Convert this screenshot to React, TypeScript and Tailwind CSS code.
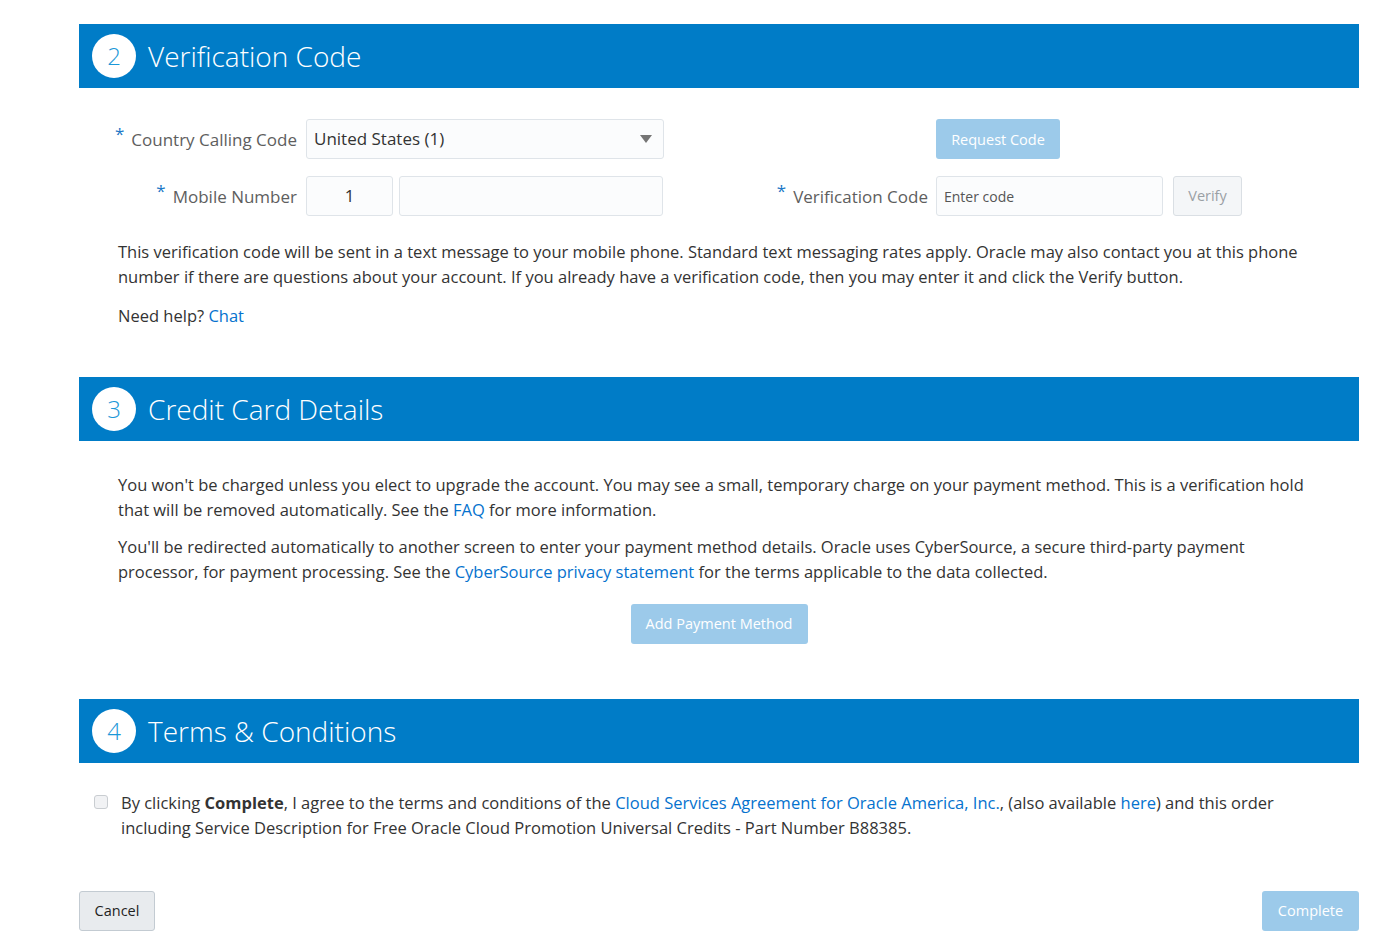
import React from "react";

const font = { fontFamily: "'Open Sans', 'Noto Sans', sans-serif" };

const SectionHeader: React.FC<{ step: number; title: string }> = ({ step, title }) => (
    <div className="flex h-[64px] items-center bg-[#007cc7] pl-[13px]">
        <div className="flex h-[44px] w-[44px] items-center justify-center rounded-full bg-white text-[24px] font-light text-[#1b98d8]">
            {step}
        </div>
        <h2 className="ml-[12px] -mt-[1px] text-[28px] font-light text-white">{title}</h2>
    </div>
);

const Label: React.FC<{ text: string; className?: string }> = ({ text, className }) => (
    <label className={"flex items-start justify-end pt-[1px] text-[17px] text-[#5e5e5e] " + (className || "")}>
        <span className="relative -top-[6px] mr-[7px] text-[17px] text-[#1c78c7]">*</span>
        <span>{text}</span>
    </label>
);

const boxBase = "h-[40px] rounded-[3px] border border-[#dfe4e9] bg-[#fbfcfd] text-[#333]";
const inputBase = boxBase + " text-[17px]";

export default function App() {
    return (
        <div className="min-h-[941px] bg-white pt-[24px] text-[#333]" style={font}>
            <div className="ml-[79px] w-[1280px]">
                {/* Verification Code */}
                <SectionHeader step={2} title="Verification Code" />
                <div className="pt-[31px] pb-[49px]">
                    <div className="flex h-[40px] items-center">
                        <div className="flex w-[621px] items-center">
                            <Label text="Country Calling Code" className="w-[218px]" />
                            <div className={inputBase + " ml-[9px] flex w-[358px] items-center justify-between px-[7px]"}>
                                <span>United States (1)</span>
                                <svg width="12" height="8" viewBox="0 0 12 8" className="mr-[4px]">
                                    <path d="M0 0h12L6 8z" fill="#757575" />
                                </svg>
                            </div>
                        </div>
                        <div className="ml-[236px]">
                            <button className="h-[40px] w-[124px] rounded-[3px] bg-[#9ccaea] pt-[1px] text-[14.5px] text-white">
                                Request Code
                            </button>
                        </div>
                    </div>
                    <div className="mt-[17px] flex h-[40px] items-center">
                        <div className="flex w-[621px] items-center">
                            <Label text="Mobile Number" className="w-[218px]" />
                            <div className={inputBase + " ml-[9px] flex w-[87px] items-center justify-center"}>1</div>
                            <div className={inputBase + " ml-[6px] w-[264px]"}></div>
                        </div>
                        <Label text="Verification Code" className="w-[228px]" />
                        <div className={boxBase + " ml-[8px] flex w-[227px] items-center px-[7px] text-[14px] text-[#555]"}>
                            Enter code
                        </div>
                        <button className="ml-[10px] h-[40px] w-[69px] rounded-[3px] border border-[#dadfe4] bg-[#f4f6f8] text-[14.5px] text-[#9aa0a5]">
                            Verify
                        </button>
                    </div>
                    <div className="mt-[23px] pl-[39px] pr-[40px] text-[16.5px] leading-[25px]">
                        <p>
                            This verification code will be sent in a text message to your mobile phone. Standard text messaging rates apply. Oracle may also contact you at this phone number if there are questions about your account. If you already have a verification code, then you may enter it and click the Verify button.
                        </p>
                        <p className="mt-[14px]">
                            Need help? <a className="text-[#0572ce]">Chat</a>
                        </p>
                    </div>
                </div>

                {/* Credit Card Details */}
                <SectionHeader step={3} title="Credit Card Details" />
                <div className="pt-[31px] pb-[55px]">
                    <div className="pl-[39px] pr-[40px] text-[16.5px] leading-[25px]">
                        <p>
                            You won't be charged unless you elect to upgrade the account. You may see a small, temporary charge on your payment method. This is a verification hold that will be removed automatically. See the <a className="text-[#0572ce]">FAQ</a> for more information.
                        </p>
                        <p className="mt-[12px]">
                            You'll be redirected automatically to another screen to enter your payment method details. Oracle uses CyberSource, a secure third-party payment processor, for payment processing. See the <a className="text-[#0572ce]">CyberSource privacy statement</a> for the terms applicable to the data collected.
                        </p>
                    </div>
                    <div className="mt-[20px] flex justify-center">
                        <button className="h-[40px] w-[177px] rounded-[3px] bg-[#9ccaea] text-[14.5px] text-white">
                            Add Payment Method
                        </button>
                    </div>
                </div>

                {/* Terms & Conditions */}
                <SectionHeader step={4} title="Terms & Conditions" />
                <div className="flex pt-[27px] pl-[15px] pr-[60px]">
                    <div className="mt-[5px] h-[14px] w-[14px] shrink-0 rounded-[3px] border border-[#c9cdd1] bg-[#f1f2f4]"></div>
                    <p className="ml-[13px] text-[16.5px] leading-[25px]">
                        By clicking <b className="font-bold">Complete</b>, I agree to the terms and conditions of the <a className="text-[#0572ce]">Cloud Services Agreement for Oracle America, Inc.</a>, (also available <a className="text-[#0572ce]">here</a>) and this order including Service Description for Free Oracle Cloud Promotion Universal Credits - Part Number B88385.
                    </p>
                </div>
                <div className="mt-[51px] flex justify-between">
                    <button className="h-[40px] w-[76px] rounded-[3px] border border-[#c3cbd2] bg-[#e8ebee] text-[14.5px] text-[#1f1f1f]">
                        Cancel
                    </button>
                    <button className="h-[40px] w-[97px] rounded-[3px] bg-[#9ccaea] text-[14.5px] text-white">
                        Complete
                    </button>
                </div>
            </div>
        </div>
    );
}
